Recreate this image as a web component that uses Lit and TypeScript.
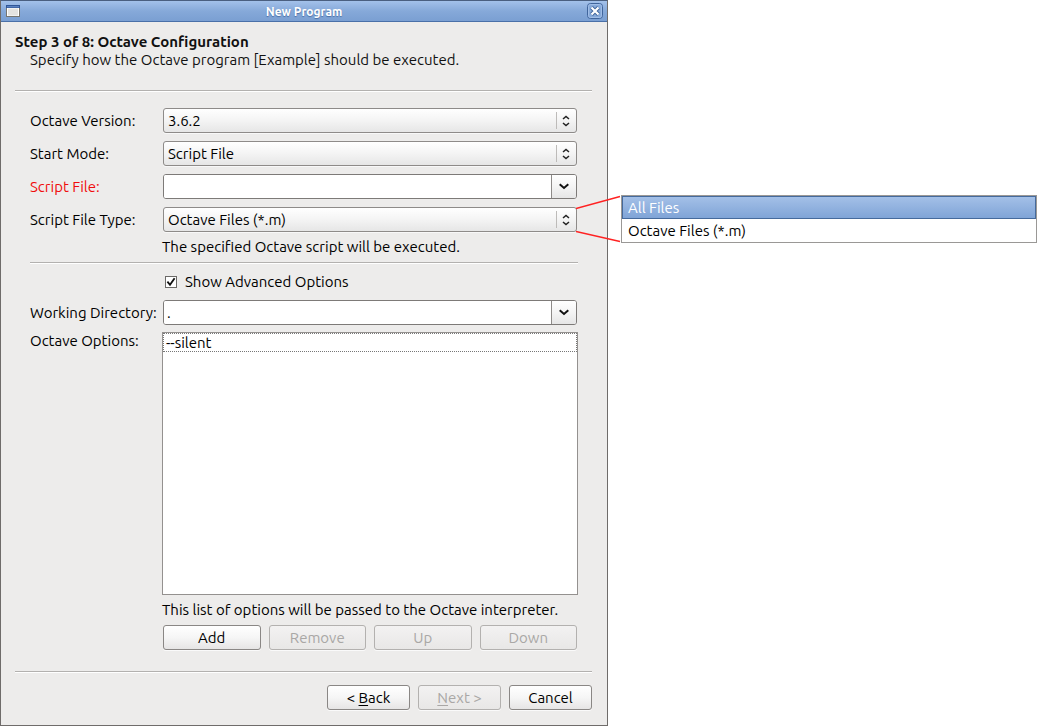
import { LitElement, html, css, svg } from "lit";
import { customElement, property, state } from "lit/decorators.js";
import { classMap } from "lit/directives/class-map.js";

const sortArrows = html`<svg width="8" height="12" viewBox="0 0 8 12" aria-hidden="true">
  ${svg`<path d="M1 4 4 1.4 7 4M1 8 4 10.6 7 8" fill="none" stroke="#222" stroke-width="1.5"/>`}
</svg>`;

const chevron = html`<svg width="10" height="7" viewBox="0 0 10 7" aria-hidden="true">
  ${svg`<path d="M.7 1.2 5 4.9 9.3 1.2" fill="none" stroke="#111" stroke-width="2"/>`}
</svg>`;

const FONT = css`
  :host {
    font-family: Ubuntu, "Noto Sans", "Open Sans", sans-serif;
    font-size: 15px;
    line-height: 18px;
    color: #000;
  }
  * {
    box-sizing: border-box;
  }
`;

@customElement("choice-field")
export class ChoiceField extends LitElement {
  static styles = [
    FONT,
    css`
      :host {
        display: block;
        padding: 0 1px;
      }
      .box {
        display: grid;
        height: 25px;
        border: 1px solid #8e8b89;
        border-radius: 3px;
        background: linear-gradient(#ffffff, #f4f4f4 50%, #e6e6e6);
        box-shadow: 0 1px 0 #f8f8f8;
      }
      select {
        grid-area: 1 / 1;
        appearance: none;
        width: 100%;
        height: 23px;
        border: 0;
        margin: 0;
        padding: 0 24px 0 4px;
        background: none;
        font: inherit;
        color: inherit;
        outline: none;
      }
      .arrow {
        grid-area: 1 / 1;
        justify-self: end;
        align-self: center;
        width: 20px;
        height: 17px;
        display: flex;
        align-items: center;
        justify-content: center;
        padding-right: 2px;
        border-left: 1px solid #bdbbb9;
        pointer-events: none;
      }
    `,
  ];

  @property() label = "";
  @property() value = "";
  @property({ attribute: false }) options: string[] = [];

  render() {
    return html`<div class="box">
      <select aria-label=${this.label}>
        ${this.options.map((o) => html`<option ?selected=${o === this.value}>${o}</option>`)}
      </select>
      <span class="arrow">${sortArrows}</span>
    </div>`;
  }
}

@customElement("path-field")
export class PathField extends LitElement {
  static styles = [
    FONT,
    css`
      :host {
        display: block;
        padding: 0 1px;
      }
      .box {
        display: flex;
        height: 25px;
        border: 1px solid #7d7a78;
        border-radius: 3px;
        background: #fff;
        overflow: hidden;
      }
      input {
        flex: 1;
        min-width: 0;
        border: 0;
        margin: 0;
        padding: 0 3px;
        background: #fff;
        font: inherit;
        color: inherit;
        outline: none;
      }
      button {
        width: 25px;
        display: flex;
        align-items: center;
        justify-content: center;
        padding: 0;
        border: 0;
        border-left: 1px solid #8e8b89;
        background: linear-gradient(#ffffff, #f4f4f4 50%, #e6e6e6);
      }
    `,
  ];

  @property() label = "";
  @property() value = "";

  render() {
    return html`<div class="box">
      <input type="text" aria-label=${this.label} .value=${this.value} />
      <button type="button" aria-label="Browse ${this.label}">${chevron}</button>
    </div>`;
  }
}

@customElement("app-root")
export class AppRoot extends LitElement {
  static styles = [
    FONT,
    css`
      :host {
        display: block;
        min-height: 100vh;
        background: #fff;
      }
      .dialog {
        display: flex;
        flex-direction: column;
        width: 100%;
        max-width: 608px;
        min-height: 100vh;
        border: 1px solid #6f6c6a;
        border-top-color: #4a5f80;
        background: #edeceb;
      }
      .titlebar {
        display: grid;
        grid-template-columns: 24px 1fr 24px;
        align-items: center;
        height: 21px;
        border-bottom: 1px solid #4a70a8;
        background: linear-gradient(#a3c1ea, #86a9d9 50%, #7a9fd2);
      }
      .titlebar h1 {
        margin: 0;
        padding-top: 2px;
        text-align: center;
        font-size: 12px;
        line-height: 18px;
        font-weight: 700;
        color: #fff;
        text-shadow: 0 1px 1px #4a6fa5;
      }
      .titlebar svg {
        display: block;
      }
      .winicon {
        justify-self: center;
      }
      .close {
        display: block;
        padding: 0;
        border: 0;
        background: none;
        justify-self: center;
      }
      .body {
        flex: 1;
        display: flex;
        flex-direction: column;
        padding: 11px 15px 15px 14px;
      }
      h2 {
        margin: 0;
        font-size: 15px;
        line-height: 18px;
        font-weight: 700;
        color: #111;
      }
      .intro {
        margin: 0 0 21px;
        padding-left: 15px;
        color: #111;
      }
      hr {
        width: 100%;
        height: 2px;
        margin: 0;
        border: 0;
        border-top: 1px solid #b3b1af;
        border-bottom: 1px solid #fff;
      }
      .form {
        flex: 1;
        display: flex;
        flex-direction: column;
        padding: 16px 14px 21px 15px;
      }
      .fields {
        display: flex;
        flex-direction: column;
        gap: 8px;
      }
      .row {
        display: grid;
        grid-template-columns: 132px minmax(0, 1fr);
        align-items: center;
      }
      .row.grow {
        flex: 1;
        align-items: stretch;
        margin-top: 7px;
      }
      .missing {
        color: #f00d0d;
      }
      .note {
        grid-column: 2;
        margin: 6px 0;
      }
      .check {
        grid-column: 2;
        display: flex;
        align-items: center;
        gap: 8px;
        padding: 9px 0 9px 3px;
      }
      .tick {
        display: grid;
        width: 12px;
        height: 12px;
      }
      .tick input {
        grid-area: 1 / 1;
        appearance: none;
        width: 12px;
        height: 12px;
        margin: 0;
        border: 1px solid #6b6967;
        background: #fff;
      }
      .tick svg {
        grid-area: 1 / 1;
        pointer-events: none;
      }
      .anchor {
        position: relative;
      }
      .leader {
        position: absolute;
        left: calc(100% - 2px);
        top: -13px;
        z-index: 1;
        pointer-events: none;
      }
      .popup {
        position: absolute;
        left: calc(100% + 43px);
        top: -12px;
        width: 100%;
        margin: 0;
        padding: 0;
        list-style: none;
        border: 1px solid #9a9896;
        background: #fff;
        z-index: 1;
      }
      .popup li {
        height: 23px;
        padding: 1px 6px 0;
        line-height: 22px;
      }
      .popup .active {
        color: #fff;
        background: linear-gradient(#a5c1e8, #7ea3d6);
        box-shadow: inset 0 0 0 1px #456a9c;
      }
      .list {
        margin: 0;
        padding: 0;
        list-style: none;
        border: 1px solid #94918f;
        background: #fff;
      }
      .list li {
        height: 19px;
        padding: 0 2px;
        line-height: 18px;
        border: 1px dotted #777;
      }
      .actions {
        grid-column: 2;
        display: grid;
        grid-template-columns: repeat(4, 1fr);
        gap: 8px;
        padding: 0 1px;
      }
      .footer {
        display: flex;
        justify-content: flex-end;
        gap: 8px;
        padding-top: 12px;
      }
      .btn {
        height: 25px;
        padding: 0;
        border: 1px solid #8a8785;
        border-radius: 3px;
        background: linear-gradient(#ffffff, #f6f6f6 50%, #e6e5e5);
        box-shadow: 0 1px 0 #fafafa;
        font: inherit;
        color: #000;
      }
      .btn:disabled {
        border-color: #b3b1af;
        background: linear-gradient(#f3f2f2, #e8e7e6);
        color: #a9a7a5;
      }
      .footer .btn {
        width: 83px;
      }
      .btn u {
        text-underline-offset: 2px;
      }
    `,
  ];

  @state() private fileTypes = ["All Files", "Octave Files (*.m)"];
  @state() private octaveOptions = ["--silent"];

  render() {
    return html`
      <main class="dialog">
        <header class="titlebar">
          <svg class="winicon" width="14" height="12" viewBox="0 0 14 12" aria-hidden="true">
            <rect x=".5" y=".5" width="13" height="11" fill="#fff" stroke="#77756f" />
            <rect x="2" y="3.5" width="10" height="7" fill="#e4e3e0" />
            <path d="M0 1.5h14" stroke="#2f5596" stroke-width="3" />
            <path d="M1 1.8h12" stroke="#6d95d2" />
          </svg>
          <h1>New Program</h1>
          <button class="close" type="button" aria-label="Close">
            <svg width="16" height="16" viewBox="0 0 16 16">
              <rect x=".5" y=".5" width="15" height="15" rx="3" fill="#86a9d9" stroke="#40659c" />
              <rect x="1.5" y="1.5" width="13" height="13" rx="2" fill="none" stroke="#a0bde6" />
              <path d="M4.5 4.5 11.5 11.5M11.5 4.5 4.5 11.5" stroke="#40659c" stroke-width="4" />
              <path d="M4.5 4.5 11.5 11.5M11.5 4.5 4.5 11.5" stroke="#fff" stroke-width="2.2" />
            </svg>
          </button>
        </header>
        <div class="body">
          <h2>Step 3 of 8: Octave Configuration</h2>
          <p class="intro">Specify how the Octave program [Example] should be executed.</p>
          <hr />
          <div class="form">
            <div class="fields">
              <div class="row">
                <label for="version">Octave Version:</label>
                <choice-field id="version" label="Octave Version" value="3.6.2" .options=${["3.6.2"]}></choice-field>
              </div>
              <div class="row">
                <label for="mode">Start Mode:</label>
                <choice-field id="mode" label="Start Mode" value="Script File" .options=${["Script File"]}></choice-field>
              </div>
              <div class="row">
                <label class="missing" for="script">Script File:</label>
                <path-field id="script" label="Script File"></path-field>
              </div>
              <div class="row">
                <label for="type">Script File Type:</label>
                <div class="anchor">
                  <choice-field
                    id="type"
                    label="Script File Type"
                    value="Octave Files (*.m)"
                    .options=${this.fileTypes}
                  ></choice-field>
                  <svg class="leader" width="46" height="50" viewBox="0 0 46 50" aria-hidden="true">
                    <path d="M0 14.5 44 2.5M0 37.5 44 47.5" fill="none" stroke="#f22" stroke-width="1.4" />
                  </svg>
                  <ul class="popup" role="listbox" aria-label="Script File Type">
                    ${this.fileTypes.map(
                      (t, i) =>
                        html`<li role="option" aria-selected=${i === 0} class=${classMap({ active: i === 0 })}>${t}</li>`
                    )}
                  </ul>
                </div>
              </div>
            </div>
            <div class="row"><p class="note">The specified Octave script will be executed.</p></div>
            <hr />
            <div class="row">
              <label class="check">
                <span class="tick">
                  <input type="checkbox" checked />
                  <svg width="12" height="12" viewBox="0 0 12 12" aria-hidden="true">
                    <path d="M2.4 5.6 5 8.8 9.6 2.2" fill="none" stroke="#111" stroke-width="1.8" />
                  </svg>
                </span>
                Show Advanced Options
              </label>
            </div>
            <div class="row">
              <label for="workdir">Working Directory:</label>
              <path-field id="workdir" label="Working Directory" value="."></path-field>
            </div>
            <div class="row grow">
              <span id="options-label">Octave Options:</span>
              <ul class="list" role="listbox" aria-labelledby="options-label">
                ${this.octaveOptions.map((o) => html`<li role="option">${o}</li>`)}
              </ul>
            </div>
            <div class="row"><p class="note">This list of options will be passed to the Octave interpreter.</p></div>
            <div class="row">
              <div class="actions">
                <button class="btn" type="button">Add</button>
                <button class="btn" type="button" disabled>Remove</button>
                <button class="btn" type="button" disabled>Up</button>
                <button class="btn" type="button" disabled>Down</button>
              </div>
            </div>
          </div>
          <hr />
          <div class="footer">
            <button class="btn" type="button">&lt; <u>B</u>ack</button>
            <button class="btn" type="button" disabled><u>N</u>ext &gt;</button>
            <button class="btn" type="button">Cancel</button>
          </div>
        </div>
      </main>
    `;
  }
}
